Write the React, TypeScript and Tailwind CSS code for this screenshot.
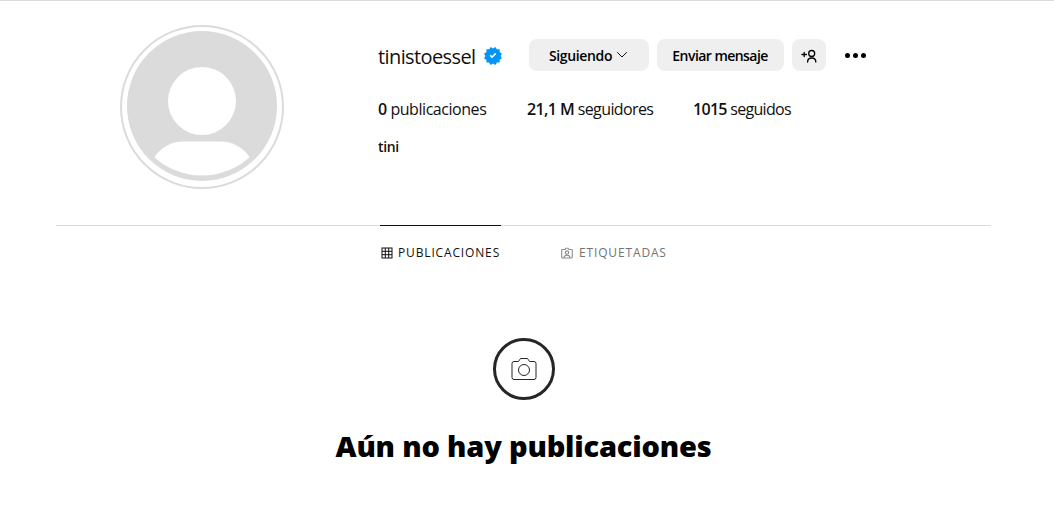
import React from "react";

function Avatar() {
  return (
    <div className="w-[164px] h-[164px] rounded-full border-[2px] border-[#dbdbdb] flex items-center justify-center">
      <svg width="150" height="150" viewBox="0 0 150 150" className="-mt-[2px]">
        <defs>
          <clipPath id="c"><circle cx="75" cy="73" r="71.5" /></clipPath>
        </defs>
        <circle cx="75" cy="75" r="75" fill="#dbdbdb" />
        <circle cx="75" cy="70" r="34" fill="#fff" />
        <path d="M20 150 L26 128 C 34 116, 45 110.6, 56 110.6 L94 110.6 C105 110.6, 116 116, 124 128 L130 150 Z" fill="#fff" clipPath="url(#c)" />
      </svg>
    </div>
  );
}

function Verified() {
  return (
    <svg width="18" height="18" viewBox="0 0 40 40" className="ml-[8px] mt-[1px]">
      <path
        fill="#0095f6"
        fillRule="evenodd"
        d="M19.998 3.094 14.638 0l-2.972 5.15H5.432v6.354L0 14.64 3.094 20 0 25.359l5.432 3.137v5.905h5.975L14.638 40l5.36-3.094L25.358 40l3.232-5.6h6.162v-6.01L40 25.359 36.905 20 40 14.641l-5.248-3.03v-6.46h-6.419L25.358 0l-5.36 3.094Z"
      />
      <path fill="#fff" d="M17.8 24.9l-5.3-5.3 2.4-2.4 2.9 2.9 7.2-7.2 2.4 2.4-9.6 9.6Z" />
    </svg>
  );
}

function Chevron() {
  return (
    <svg width="12" height="12" viewBox="0 0 12 12" fill="none" stroke="#111" strokeWidth="1" strokeLinecap="round" strokeLinejoin="round" className="ml-[4px]">
      <path d="M1.5 3.5 L6 8 L10.5 3.5" />
    </svg>
  );
}

function AddPerson() {
  return (
    <svg width="16" height="16" viewBox="0 0 16 16" fill="none" stroke="#000" strokeWidth="1.3" strokeLinecap="round" strokeLinejoin="round">
      <circle cx="10.7" cy="6.5" r="3" />
      <path d="M6.6 15 C6.6 12.2 8 11 10.7 11 C13.4 11 14.8 12.2 14.8 15" />
      <path d="M1 7.5 H5.4 M3.2 5.4 V9.6" />
    </svg>
  );
}

function Grid() {
  return (
    <svg width="12" height="12" viewBox="0 0 12 12" fill="none" stroke="#111" strokeWidth="1">
      <rect x="1" y="1" width="10" height="10" />
      <path d="M1 4.3 H11 M1 7.7 H11 M4.3 1 V11 M7.7 1 V11" />
    </svg>
  );
}

function Tagged() {
  return (
    <svg width="12" height="12" viewBox="0 0 12 12" fill="none" stroke="#8e8e8e" strokeWidth="1.1">
      <path d="M1.5 2.5 H4 L4.8 1.2 H7.2 L8 2.5 H10.5 Q11.3 2.5 11.3 3.3 V10 Q11.3 11 10.3 11 H1.7 Q0.7 11 0.7 10 V3.3 Q0.7 2.5 1.5 2.5 Z" />
      <circle cx="6" cy="5.6" r="1.7" />
      <path d="M3 11 C3 9 4.2 8.3 6 8.3 C7.8 8.3 9 9 9 11" />
    </svg>
  );
}

function Camera() {
  return (
    <svg width="26" height="24" viewBox="0 0 26 24" fill="none" stroke="#262626" strokeWidth="1">
      <path d="M3 4.5 H7.5 L9.5 1.5 H16.5 L18.5 4.5 H23 Q25 4.5 25 6.5 V20.5 Q25 22.5 23 22.5 H3 Q1 22.5 1 20.5 V6.5 Q1 4.5 3 4.5 Z" strokeLinejoin="round" />
      <circle cx="13" cy="13" r="5.5" />
    </svg>
  );
}

function Btn({ className, children }: { className: string; children: React.ReactNode }) {
  return (
    <div className={`h-[32px] rounded-[8px] bg-[#efefef] flex items-center justify-center text-[14px] font-semibold text-black ${className}`}>
      {children}
    </div>
  );
}

export default function App() {
  return (
    <div className="h-[511px] overflow-hidden bg-white border-t border-[#dbdbdb] font-['Open_Sans','Noto_Sans',sans-serif] text-[#000]">
      <div className="w-[935px] ml-[56px]">
        <header className="flex h-[225px] border-b border-[#dbdbdb]">
          <div className="w-[322px] pl-[64px] pt-[24px] shrink-0">
            <Avatar />
          </div>
          <div className="pt-[38px]">
            <div className="flex items-center h-[32px]">
              <span className="text-[20px] leading-[32px] text-[#111] tracking-[-0.6px] mt-[3px]">tinistoessel</span>
              <Verified />
              <Btn className="w-[120px] ml-[27px] tracking-[-0.35px]">Siguiendo<Chevron /></Btn>
              <Btn className="w-[127px] ml-[8px] tracking-[-0.55px]">Enviar mensaje</Btn>
              <Btn className="w-[34px] ml-[8px]"><AddPerson /></Btn>
              <div className="ml-[19px] flex gap-[3px] items-center">
                <span className="w-[5px] h-[5px] rounded-full bg-black" />
                <span className="w-[5px] h-[5px] rounded-full bg-black" />
                <span className="w-[5px] h-[5px] rounded-full bg-black" />
              </div>
            </div>
            <div className="flex mt-[28px] text-[16px] leading-[20px] text-[#111]">
              <span className="w-[149px] tracking-[-0.45px]"><b className="font-semibold">0</b> publicaciones</span>
              <span className="w-[166px] tracking-[-0.6px]"><b className="font-semibold">21,1 M</b> seguidores</span>
              <span className="tracking-[-0.7px]"><b className="font-semibold">1015</b> seguidos</span>
            </div>
            <div className="mt-[18px] text-[14px] leading-[20px] font-semibold tracking-[-0.4px] text-[#111]">tini</div>
          </div>
        </header>
        <div className="flex pl-[324px]">
          <div className="flex gap-[60px] -mt-px h-[53px]">
            <div className="border-t border-[#111] h-[54px] flex items-center gap-[5px] w-[121px] pl-px">
              <Grid />
              <span className="text-[12px] font-medium tracking-[0.85px] text-[#111]">PUBLICACIONES</span>
            </div>
            <div className="h-[54px] pt-px flex items-center gap-[6px]">
              <Tagged />
              <span className="text-[12px] font-medium tracking-[0.85px] text-[#737373]">ETIQUETADAS</span>
            </div>
          </div>
        </div>
        <div className="flex flex-col items-center pt-[60px]">
          <div className="w-[62px] h-[62px] rounded-full border-[3px] border-[#262626] flex items-center justify-center">
            <Camera />
          </div>
          <h1 className="mt-[23px] text-[29px] leading-[46px] font-black text-black tracking-[-0.2px] font-['Noto_Sans','Open_Sans',sans-serif]">Aún no hay publicaciones</h1>
        </div>
      </div>
    </div>
  );
}
